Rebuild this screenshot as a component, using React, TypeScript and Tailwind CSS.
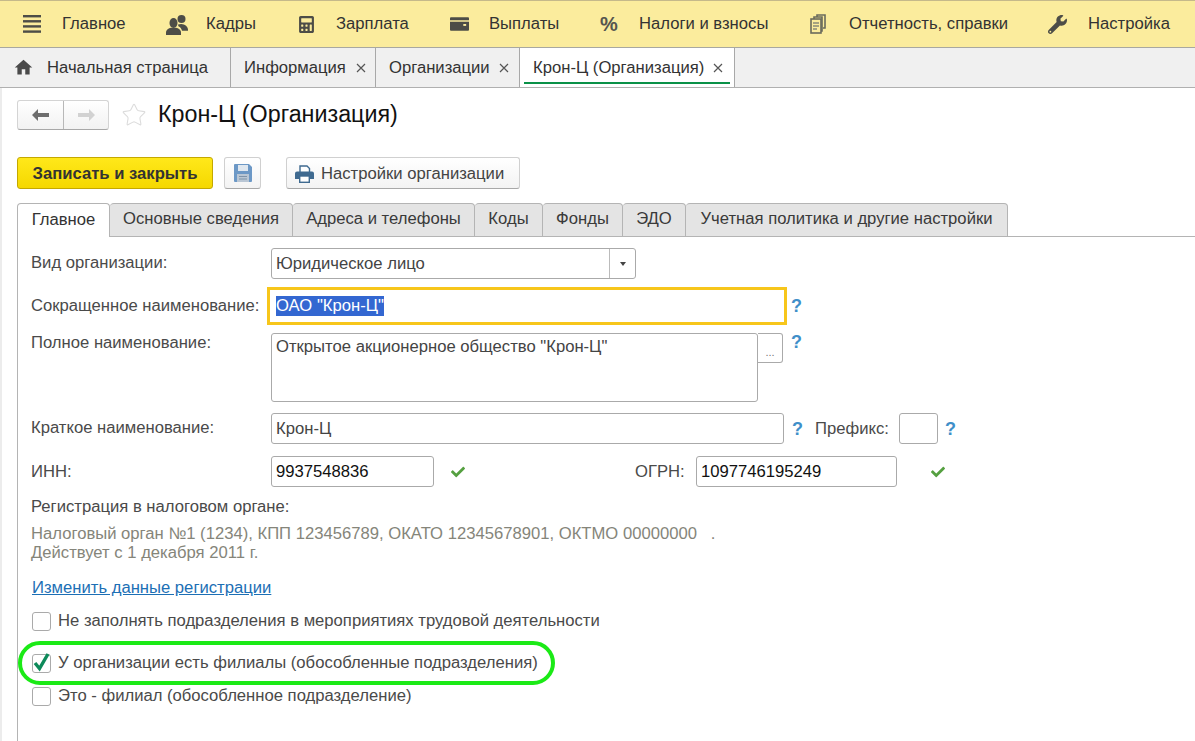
import { FaCalculator, FaCheck, FaWrench } from "react-icons/fa";
import { MdHome } from "react-icons/md";
import { Star } from "lucide-react";

function Burger() {
  return (
    <svg width="18" height="18" viewBox="0 0 18 18" fill="#4d4d47">
      <rect y="0" width="18" height="2.4" />
      <rect y="5.1" width="18" height="2.4" />
      <rect y="10.2" width="18" height="2.4" />
      <rect y="15.4" width="18" height="2.4" />
    </svg>
  );
}

function PeopleIcon() {
  return (
    <svg width="22" height="21" viewBox="0 0 22 21" fill="#4d4d47">
      <circle cx="15.5" cy="5" r="4" />
      <path d="M12 10.5c3-1.2 6-.6 8 1.3 1.4 1.3 2 2.6 2 4v1h-6c-.3-2-1.8-3.8-3.6-4.6z" />
      <ellipse cx="7.5" cy="9" rx="4" ry="5" />
      <path d="M0 21v-2.5c0-2.6 2.6-4.3 5-4.8h5c2.4.5 5 2.2 5 4.8V21z" />
    </svg>
  );
}

function WalletIcon() {
  return (
    <svg width="19" height="14" viewBox="0 0 20 14" fill="#4d4d47">
      <path d="M1 0h18a1 1 0 0 1 1 1v2H0V1a1 1 0 0 1 1-1z" />
      <path d="M0 4.5h20V13a1 1 0 0 1-1 1H1a1 1 0 0 1-1-1z" />
      <rect x="14" y="7" width="3" height="2" fill="#fbec9d" />
    </svg>
  );
}

function DocsIcon() {
  return (
    <svg width="16" height="20" viewBox="0 0 16 20" fill="none" stroke="#6b6b5c" strokeWidth="1.6">
      <path d="M7 3V1h8v13h-2" />
      <path d="M4 5V3h8v14h-1" />
      <rect x="1" y="5" width="10" height="14" fill="#fbec9d" />
      <path d="M3 9h6M3 12h6M3 15h4" stroke="#8a8a78" />
    </svg>
  );
}

function SaveIcon() {
  return (
    <svg width="18" height="18" viewBox="0 0 18 18">
      <path d="M1 0h14l3 3v14a1 1 0 0 1-1 1H1a1 1 0 0 1-1-1V1a1 1 0 0 1 1-1z" fill="#6c98c6" />
      <rect x="4" y="1" width="10" height="6" fill="#dfe7ef" />
      <rect x="3" y="10" width="12" height="8" fill="#b9c6d4" />
      <rect x="5" y="12" width="8" height="1" fill="#7f93a8" />
      <rect x="5" y="14.5" width="8" height="1" fill="#7f93a8" />
    </svg>
  );
}

function PrintIcon() {
  return (
    <svg width="19" height="18" viewBox="0 0 19 18">
      <path d="M5 7V1h7l2.500 2.500V7" fill="#fff" stroke="#3f6a90" strokeWidth="1.4" />
      <path d="M2 6.500h15a2 2 0 0 1 2 2V14h-4v-3H4v3H0V8.500a2 2 0 0 1 2-2z" fill="#3f6a90" />
      <rect x="4.700" y="11" width="9.600" height="6.300" fill="#fff" stroke="#3f6a90" strokeWidth="1.400" />
    </svg>
  );
}

function ArrowIcon({ dir, color }: { dir: "left" | "right"; color: string }) {
  return (
    <svg width="17" height="12" viewBox="0 0 17 12" fill={color}>
      {dir === "left" ? <path d="M0 6l6-6v4h11v4H6v4z" /> : <path d="M17 6l-6-6v4H0v4h11v4z" />}
    </svg>
  );
}

function Hint({ className = "" }: { className?: string }) {
  return <span className={`block w-[10px] text-[18px] font-bold leading-none text-[#3f8fc9] ${className}`}>?</span>;
}

function CloseMark() {
  return (
    <svg width="10" height="10" viewBox="0 0 10 10" stroke="#555" strokeWidth="1.2">
      <path d="M1 1l8 8M9 1l-8 8" />
    </svg>
  );
}

const menu = [
  { label: "Главное", icon: <Burger />, w: "w-[143px]", gap: "w-[39px]" },
  { label: "Кадры", icon: <PeopleIcon />, w: "w-[132px]", gap: "w-[40px]" },
  { label: "Зарплата", icon: <FaCalculator size={17} color="#4d4d47" />, w: "w-[152px]", gap: "w-[38px]" },
  { label: "Выплаты", icon: <WalletIcon />, w: "w-[150px]", gap: "w-[39px]" },
  {
    label: "Налоги и взносы",
    icon: <span className="text-[20px] font-bold leading-none text-[#55554f]">%</span>,
    w: "w-[210px]",
    gap: "w-[39px]",
  },
  { label: "Отчетность, справки", icon: <DocsIcon />, w: "w-[238px]", gap: "w-[39px]" },
  { label: "Настройка", icon: <FaWrench size={19} color="#4d4d47" />, w: "w-[120px]", gap: "w-[40px]" },
];

const formTabs = [
  { label: "Основные сведения", w: "w-[183px]" },
  { label: "Адреса и телефоны", w: "w-[182px]" },
  { label: "Коды", w: "w-[68px]" },
  { label: "Фонды", w: "w-[80px]" },
  { label: "ЭДО", w: "w-[63px]" },
  { label: "Учетная политика и другие настройки", w: "w-[322px]" },
];

export default function App() {
  return (
    <div className="relative h-[741px] w-[1195px] overflow-hidden bg-white font-['Liberation_Sans',Arial,sans-serif] text-[16.65px] leading-[24px] text-[#4a4a4a]">
      {/* Main menu */}
      <div className="flex h-[48px] items-center border-y border-t-[#c5b98a] border-b-[#a8a8a0] bg-[#fbec9d] pl-[23px] text-[#333]">
        {menu.map((m) => (
          <div key={m.label} className={`flex shrink-0 items-center ${m.w}`}>
            <span className={`flex shrink-0 items-center ${m.gap}`}>{m.icon}</span>
            <span className="whitespace-nowrap">{m.label}</span>
          </div>
        ))}
      </div>

      {/* Open windows */}
      <div className="flex h-[40px] border-b border-[#b0b0b0] bg-[#f0f0f0] text-[#333]">
        <div className="flex w-[231px] shrink-0 items-center gap-[13px] border-r border-[#a8a8a8] pl-[13px]">
          <MdHome size={21} color="#4a4a4a" />
          <span className="whitespace-nowrap">Начальная страница</span>
        </div>
        <div className="flex w-[145px] shrink-0 items-center justify-between border-r border-[#a8a8a8] pl-[13px] pr-[9px]">
          <span>Информация</span>
          <CloseMark />
        </div>
        <div className="flex w-[144px] shrink-0 items-center justify-between border-r border-[#a8a8a8] pl-[13px] pr-[10px]">
          <span>Организации</span>
          <CloseMark />
        </div>
        <div className="relative flex w-[215px] shrink-0 items-center justify-between border-r border-[#a8a8a8] bg-white pl-[13px] pr-[11px]">
          <span className="whitespace-nowrap">Крон-Ц (Организация)</span>
          <CloseMark />
          <div className="absolute bottom-[3px] left-[4px] right-[4px] h-[2px] bg-[#0a9148]" />
        </div>
      </div>

      <div className="border-l-2 border-[#ececec] pl-[15px]">
        {/* Title row */}
        <div className="flex h-[54px] items-center">
          <div className="flex h-[30px] w-[92px] rounded-[3px] border border-[#d4d4d4] border-b-[#a8a8a8] bg-[linear-gradient(#fff,#f2f2f2)]">
            <div className="flex w-[46px] items-center justify-center border-r border-[#b8b8b8]">
              <ArrowIcon dir="left" color="#6e6e6e" />
            </div>
            <div className="flex flex-1 items-center justify-center">
              <ArrowIcon dir="right" color="#d2d2d2" />
            </div>
          </div>
          <Star size={26} strokeWidth={1} color="#dcdcdc" className="ml-[12px]" />
          <h1 className="ml-[11px] text-[23.3px] leading-none text-[#111]">Крон-Ц (Организация)</h1>
        </div>

        {/* Command bar */}
        <div className="mt-[15px] flex h-[32px] items-stretch">
          <button className="w-[196px] rounded-[3px] border border-[#c4a800] bg-[linear-gradient(#ffe81a,#f5d800)] pt-[1px] font-bold text-[#333]">
            Записать и закрыть
          </button>
          <button className="ml-[11px] flex w-[37px] items-center justify-center rounded-[3px] border border-[#d0d0d0] border-b-[#a8a8a8] bg-[linear-gradient(#fff,#f3f3f3)]">
            <SaveIcon />
          </button>
          <button className="ml-[25px] flex w-[234px] items-center gap-[7px] rounded-[3px] border border-[#d0d0d0] border-b-[#a8a8a8] bg-[linear-gradient(#fff,#f3f3f3)] pl-[8px] pt-[1px] text-[#444]">
            <PrintIcon />
            <span className="whitespace-nowrap">Настройки организации</span>
          </button>
        </div>

        {/* Form tabs */}
        <div className="mt-[14px] flex h-[34px] items-stretch">
          <div className="z-10 flex h-[34px] w-[93px] items-center justify-center rounded-t-[4px] border border-b-0 border-[#b4b4b4] bg-white pb-[2px] text-[#333]">
            Главное
          </div>
          {formTabs.map((t) => (
            <div
              key={t.label}
              className={`flex shrink-0 items-center justify-center whitespace-nowrap rounded-t-[4px] border border-l-0 border-[#b4b4b4] bg-[#e4e4e4] pb-[2px] text-[#3a3a3a] ${t.w}`}
            >
              {t.label}
            </div>
          ))}
          <div className="flex-1 border-b border-[#b4b4b4]" />
        </div>

        {/* Form body */}
        <div className="h-[505px] border-l border-[#b4b4b4] pl-[13px]">
          <div className="flex items-center pt-[11px]">
            <div className="w-[240px] shrink-0 -translate-y-[1px]">Вид организации:</div>
            <div className="flex h-[31px] w-[365px] items-center rounded-[3px] border border-[#aaa] pl-[4px] text-[#444]">
              <span className="flex-1">Юридическое лицо</span>
              <div className="flex h-full w-[26px] items-center justify-center border-l border-[#bbb]">
                <span className="h-0 w-0 border-x-[3.5px] border-t-[4px] border-x-transparent border-t-[#444]" />
              </div>
            </div>
          </div>

          <div className="mt-[8px] flex items-center">
            <div className="w-[236px] shrink-0 whitespace-nowrap">Сокращенное наименование:</div>
            <div className="flex h-[38px] w-[520px] items-center border-[3px] border-[#f7c61b] pl-[6px]">
              <span className="bg-[#3367d1] leading-[20px] text-white">ОАО "Крон-Ц"</span>
            </div>
            <Hint className="ml-[4px]" />
          </div>

          <div className="mt-[8px] flex items-start">
            <div className="w-[240px] shrink-0 -translate-y-[2px]">Полное наименование:</div>
            <div className="h-[69px] w-[487px] rounded-[3px] border border-[#aaa] pl-[4px] pt-[1px] text-[#444]">
              Открытое акционерное общество "Крон-Ц"
            </div>
            <div className="flex h-[30px] w-[25px] items-end justify-center rounded-r-[3px] border border-l-0 border-[#aaa] pb-[4px] text-[11px] leading-none text-[#777]">
              ...
            </div>
            <Hint className="ml-[8px]" />
          </div>

          <div className="mt-[11px] flex items-center">
            <div className="w-[240px] shrink-0 -translate-y-[1px]">Краткое наименование:</div>
            <div className="flex h-[31px] w-[513px] items-center rounded-[3px] border border-[#aaa] pl-[4px] text-[#444]">Крон-Ц</div>
            <Hint className="ml-[8px]" />
            <div className="ml-[13px] w-[84px] shrink-0">Префикс:</div>
            <div className="h-[31px] w-[39px] rounded-[3px] border border-[#aaa]" />
            <Hint className="ml-[7px]" />
          </div>

          <div className="mt-[12px] flex items-center">
            <div className="w-[240px] shrink-0">ИНН:</div>
            <div className="flex h-[31px] w-[163px] items-center rounded-[3px] border border-[#aaa] pl-[4px] text-[#111]">9937548836</div>
            <FaCheck size={14} color="#55a040" className="ml-[17px]" />
            <div className="ml-[170px] w-[61px] shrink-0">ОГРН:</div>
            <div className="flex h-[31px] w-[201px] items-center rounded-[3px] border border-[#aaa] pl-[4px] text-[#111]">1097746195249</div>
            <FaCheck size={14} color="#55a040" className="ml-[34px]" />
          </div>

          <div className="mt-[8px]">Регистрация в налоговом органе:</div>
          <div className="mt-[5px] leading-[19px] text-[#85857a]">
            <div className="whitespace-pre">Налоговый орган №1 (1234), КПП 123456789, ОКАТО 12345678901, ОКТМО 00000000   .</div>
            <div>Действует с 1 декабря 2011 г.</div>
          </div>

          <a className="ml-[1px] mt-[14px] block text-[#1c6fb5] underline">Изменить данные регистрации</a>

          <div className="mt-[12px] flex h-[18px] items-center gap-[7px] pl-[1px]">
            <span className="h-[19px] w-[19px] rounded-[3px] border border-[#aaa]" />
            <span className="whitespace-nowrap">Не заполнять подразделения в мероприятиях трудовой деятельности</span>
          </div>

          <div className="mt-[24px] flex h-[18px] items-center gap-[7px] pl-[1px]">
            <span className="flex h-[19px] w-[19px] items-center justify-center rounded-[3px] border border-[#aaa]">
              <svg width="19" height="20" viewBox="0 0 19 20" className="-mt-[3px] overflow-visible">
                <path d="M3 11l4.5 5.5L16 2" fill="none" stroke="#0d8a5a" strokeWidth="3.4" />
              </svg>
            </span>
            <span className="whitespace-nowrap">У организации есть филиалы (обособленные подразделения)</span>
          </div>

          <div className="mt-[15px] flex h-[18px] items-center gap-[7px] pl-[1px]">
            <span className="h-[19px] w-[19px] rounded-[3px] border border-[#aaa]" />
            <span className="whitespace-nowrap">Это - филиал (обособленное подразделение)</span>
          </div>
        </div>
      </div>

      {/* Green annotation around the checkbox */}
      <div className="pointer-events-none absolute left-[18px] top-[641px] h-[44px] w-[537px] rounded-[22px] border-[4px] border-[#1bea16]" />
    </div>
  );
}
